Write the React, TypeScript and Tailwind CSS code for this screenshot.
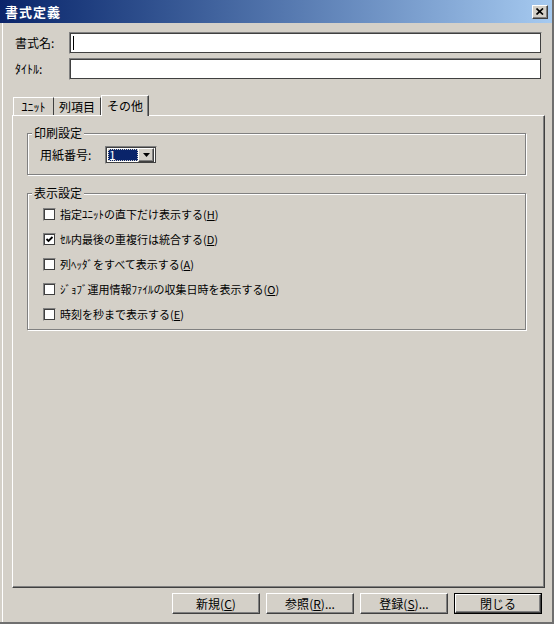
import React from "react";

const raised =
  "border border-t-white border-l-white border-r-[#404040] border-b-[#404040] shadow-[inset_-1px_-1px_0_#808080]";
const sunken =
  "border border-[#808080] border-r-[#d4d0c8] border-b-[#d4d0c8] shadow-[inset_1px_1px_0_#404040,inset_-1px_-1px_0_#404040]";

const options = [
  { text: "指定ﾕﾆｯﾄの直下だけ表示する", hot: "H" },
  { text: "ｾﾙ内最後の重複行は統合する", hot: "D", checked: true },
  { text: "列ﾍｯﾀﾞをすべて表示する", hot: "A" },
  { text: "ｼﾞｮﾌﾞ運用情報ﾌｧｲﾙの収集日時を表示する", hot: "O" },
  { text: "時刻を秒まで表示する", hot: "E" },
];

const buttons = [
  { label: "新規", hot: "C", dots: false },
  { label: "参照", hot: "R", dots: true },
  { label: "登録", hot: "S", dots: true },
];

const GroupBox = ({
  title,
  className,
  children,
}: {
  title: string;
  className: string;
  children: React.ReactNode;
}) => (
  <div
    className={`relative border border-[#808080] shadow-[inset_1px_1px_0_#fff,1px_1px_0_#fff] ${className}`}
  >
    <span className="absolute -top-[9px] left-[4px] bg-[#d4d0c8] px-[2px] text-[12px] leading-[16px]">
      {title}
    </span>
    {children}
  </div>
);

const Checkbox = ({ checked }: { checked?: boolean }) => (
  <div className={`flex h-[13px] w-[13px] items-center justify-center bg-white ${sunken}`}>
    {checked && (
      <svg width="9" height="9" viewBox="0 0 9 9">
        <path d="M1.5 4 L3.5 6 L7.5 2" fill="none" stroke="#000" strokeWidth="1.8" />
      </svg>
    )}
  </div>
);

export default function App() {
  return (
    <div className="h-[627px] w-[556px] bg-white font-['Noto_Sans_CJK_JP',sans-serif] text-black">
      <div className="flex h-[624px] w-[554px] flex-col border-r-2 border-b-2 border-r-[#6f6f6f] border-b-[#6f6f6f] bg-[#d4d0c8]">
        {/* title bar */}
        <div className="flex h-[23px] items-center justify-between bg-gradient-to-r from-[#0a246a] to-[#a6caf0] pl-[5px] pr-[4px]">
          <span className="text-[13px] font-bold leading-none tracking-[1px] text-white">書式定義</span>
          <div className={`flex h-[14px] w-[16px] items-center justify-center bg-[#d4d0c8] ${raised}`}>
            <svg width="8" height="7" viewBox="0 0 8 7">
              <path d="M0.5 0.5 L7 6.5 M7 0.5 L0.5 6.5" stroke="#000" strokeWidth="1.7" />
            </svg>
          </div>
        </div>

        <div className="ml-[2px] flex flex-1 flex-col border-l border-l-white">
          {/* name row */}
          <div className="mt-[9px] flex items-center pl-[12px]">
            <span className="w-[54px] text-[12px]">書式名:</span>
            <div className={`flex h-[22px] w-[473px] items-center bg-white pl-[3px] ${sunken}`}>
              <span className="h-[14px] w-px bg-black" />
            </div>
          </div>
          {/* title row */}
          <div className="mt-[4px] flex items-center pl-[12px]">
            <span className="w-[54px] text-[12px]">ﾀｲﾄﾙ:</span>
            <div className={`h-[22px] w-[473px] bg-white ${sunken}`} />
          </div>

          {/* tabs */}
          <div className="mt-[15px] flex h-[20px] items-end pl-[10px]">
            <div className="flex h-[18px] w-[41px] items-center justify-center border-t border-l border-r border-t-white border-l-white border-r-[#404040] text-[12px]">
              ﾕﾆｯﾄ
            </div>
            <div className="flex h-[18px] w-[47px] items-center justify-center border-t border-r border-t-white border-r-[#404040] text-[12px]">
              列項目
            </div>
            <div className="relative z-10 -mb-px flex h-[21px] w-[48px] items-start justify-center border-t border-l border-r border-t-white border-l-white border-r-[#404040] bg-[#d4d0c8] pt-[1px] text-[12px] shadow-[inset_-1px_0_0_#808080]">
              その他
            </div>
          </div>

          {/* tab panel */}
          <div className="ml-[9px] flex h-[473px] w-[533px] flex-col border border-t-white border-l-white border-r-[#404040] border-b-[#404040] pr-[18px] pl-[14px] shadow-[inset_-1px_-1px_0_#808080]">
            <GroupBox title="印刷設定" className="mt-[17px] h-[42px] pt-[12px] pl-[12px]">
              <div className="flex items-center">
                <span className="w-[65px] text-[12px]">用紙番号:</span>
                <div className={`flex h-[18px] w-[52px] items-center bg-white p-[2px] ${sunken}`}>
                  <div className="flex h-full w-[30px] items-center bg-[#0a246a] pl-[1px] text-[12px] leading-none text-white outline outline-1 outline-dotted outline-[#d4d0c8] -outline-offset-1">
                    1
                  </div>
                  <div className={`ml-auto flex h-[14px] w-[16px] items-center justify-center bg-[#d4d0c8] ${raised}`}>
                    <svg width="7" height="4" viewBox="0 0 7 4">
                      <path d="M0 0 H7 L3.5 4 Z" fill="#000" />
                    </svg>
                  </div>
                </div>
              </div>
            </GroupBox>

            <GroupBox title="表示設定" className="mt-[18px] pt-[8px] pb-[2px] pl-[15px]">
              {options.map((o) => (
                <div key={o.hot} className="flex h-[25px] items-center">
                  <Checkbox checked={o.checked} />
                  <span className="ml-[4px] text-[11px]">
                    {o.text}(<u>{o.hot}</u>)
                  </span>
                </div>
              ))}
            </GroupBox>
          </div>

          {/* buttons */}
          <div className="mt-[5px] flex justify-end gap-[6px] pr-[10px]">
            {buttons.map((b) => (
              <div
                key={b.hot}
                className={`flex h-[21px] w-[88px] items-center justify-center text-[12px] ${raised}`}
              >
                {b.label}(<u>{b.hot}</u>){b.dots ? "..." : ""}
              </div>
            ))}
            <div className="h-[21px] w-[88px] border border-black">
              <div className={`flex h-full w-full items-center justify-center text-[12px] ${raised}`}>閉じる</div>
            </div>
          </div>
        </div>
      </div>
    </div>
  );
}
